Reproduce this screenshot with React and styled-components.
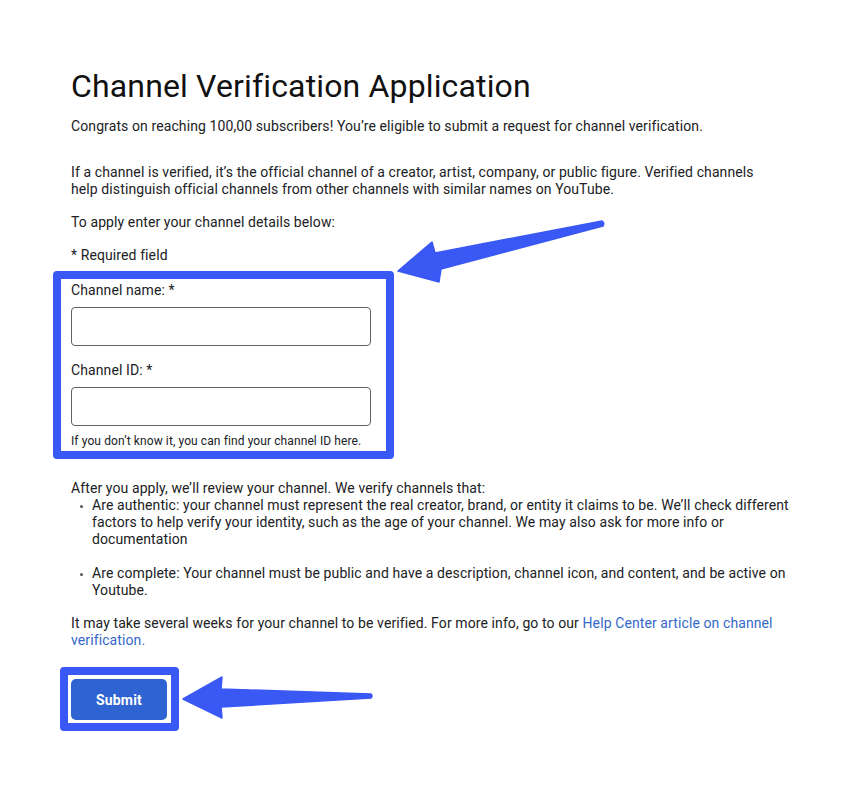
import React from "react";
import styled, { createGlobalStyle } from "styled-components";

const Global = createGlobalStyle`
  html, body { margin: 0; padding: 0; background: #ffffff; }
  body { font-family: Roboto, "Liberation Sans", Arial, sans-serif; color: #202124; }
  * { box-sizing: border-box; }
`;

const HIGHLIGHT = "#3a58f4";

const Page = styled.div`
  position: relative;
  width: 864px;
  height: 792px;
  padding: 66px 0 0 71px;
  overflow: hidden;
`;

const Content = styled.div`
  width: 730px;
  display: flex;
  flex-direction: column;
`;

const Title = styled.h1`
  margin: 0;
  font-family: Roboto, "Liberation Sans", sans-serif;
  font-weight: 400;
  font-size: 32px;
  line-height: 40px;
  color: #111111;
  letter-spacing: 0.15px;
`;

const Para = styled.p`
  margin: ${(p) => p.$mt || 0}px 0 0 0;
  font-size: 14px;
  line-height: 17px;
  color: #202124;
  letter-spacing: 0.1px;
  width: ${(p) => p.$w || 730}px;
`;

const Highlight = styled.div`
  margin: 7px 0 0 -18px;
  width: 341px;
  border: 8px solid ${HIGHLIGHT};
  border-radius: 4px;
  padding: 3px 15px 3px 10px;
  display: flex;
  flex-direction: column;
`;

const Label = styled.label`
  display: block;
  font-size: 14px;
  line-height: 17px;
  letter-spacing: 0.1px;
  margin-top: ${(p) => p.$mt || 0}px;
`;

const Input = styled.input`
  display: block;
  width: 300px;
  height: 39px;
  margin-top: 8px;
  border: 1px solid #5f6368;
  border-radius: 4px;
  background: #fff;
  outline: none;
`;

const Hint = styled.div`
  font-size: 12px;
  line-height: 14px;
  letter-spacing: 0.1px;
  margin-top: 8px;
  color: #202124;
  white-space: nowrap;
`;

const Bullets = styled.ul`
  margin: 0;
  padding: 0 0 0 21px;
  list-style: none;
  width: 730px;
`;

const Bullet = styled.li`
  position: relative;
  font-size: 14px;
  line-height: 17px;
  letter-spacing: 0.1px;
  margin-bottom: ${(p) => p.$mb || 0}px;
  &::before {
    content: "";
    position: absolute;
    left: -12px;
    top: 8px;
    width: 3px;
    height: 3px;
    border-radius: 50%;
    background: #555;
  }
`;

const Link = styled.a`
  color: #3568c8;
  text-decoration: none;
`;

const SubmitFrame = styled.div`
  margin: 18px 0 0 -11px;
  width: 119px;
  height: 64px;
  border: 8px solid ${HIGHLIGHT};
  border-radius: 4px;
  padding: 4px 0 0 3px;
`;

const SubmitButton = styled.button`
  width: 96px;
  height: 41px;
  border: none;
  border-radius: 5px;
  background: #2f63d2;
  color: #fff;
  font-family: Roboto, "Liberation Sans", sans-serif;
  font-weight: 700;
  font-size: 14px;
  letter-spacing: 0.2px;
  cursor: pointer;
`;

const ArrowLayer = styled.svg`
  position: absolute;
  left: 0;
  top: 0;
  pointer-events: none;
`;

export default function App() {
  return (
    <Page>
      <Global />
      <Content>
        <Title>Channel Verification Application</Title>
        <Para $mt={12}>
          Congrats on reaching 100,00 subscribers! You’re eligible to submit a request for channel verification.
        </Para>
        <Para $mt={29} $w={690}>
          If a channel is verified, it’s the official channel of a creator, artist, company, or public figure. Verified channels help distinguish official channels from other channels with similar names on YouTube.
        </Para>
        <Para $mt={16}>To apply enter your channel details below:</Para>
        <Para $mt={16}>* Required field</Para>
        <Highlight>
          <Label>Channel name: *</Label>
          <Input type="text" aria-label="Channel name" />
          <Label $mt={16}>Channel ID: *</Label>
          <Input type="text" aria-label="Channel ID" />
          <Hint>If you don’t know it, you can find your channel ID here.</Hint>
        </Highlight>
        <Para $mt={21}>After you apply, we’ll review your channel. We verify channels that:</Para>
        <Bullets>
          <Bullet $mb={17}>
            Are authentic: your channel must represent the real creator, brand, or entity it claims to be. We’ll check different factors to help verify your identity, such as the age of your channel. We may also ask for more info or documentation
          </Bullet>
          <Bullet>
            Are complete: Your channel must be public and have a description, channel icon, and content, and be active on Youtube.
          </Bullet>
        </Bullets>
        <Para $mt={16} $w={710}>
          It may take several weeks for your channel to be verified. For more info, go to our{" "}
          <Link href="#">Help Center article on channel verification.</Link>
        </Para>
        <SubmitFrame>
          <SubmitButton>Submit</SubmitButton>
        </SubmitFrame>
      </Content>
      <ArrowLayer width="864" height="792" viewBox="0 0 864 792">
        <path
          d="M398 271 L432 242 L435 253 L602 221 Q605 223 603 226 L441 269 L439 282 Z"
          fill={HIGHLIGHT}
          stroke={HIGHLIGHT}
          strokeWidth="1.5"
          strokeLinejoin="round"
        />
        <path
          d="M183 699 L222 677 L221 689 L371 694 Q373 696 371 698 L221 707 L222 718 Z"
          fill={HIGHLIGHT}
          stroke={HIGHLIGHT}
          strokeWidth="1.5"
          strokeLinejoin="round"
        />
      </ArrowLayer>
    </Page>
  );
}
